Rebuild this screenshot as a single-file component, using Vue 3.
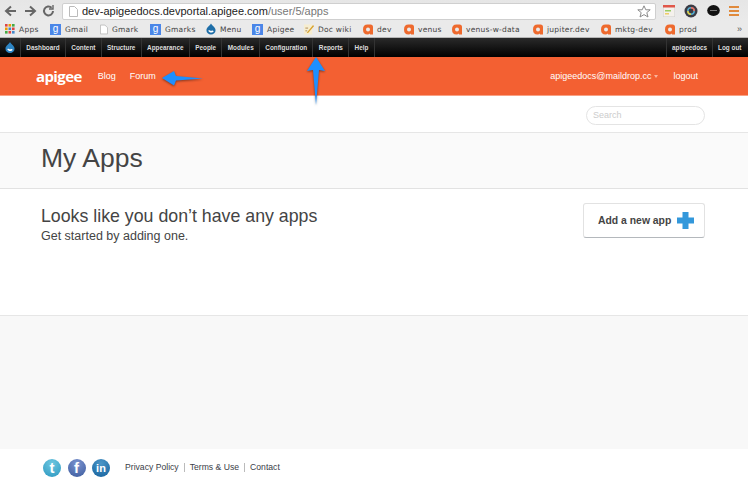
<script setup>
const marks = [
  { label: 'Apps', kind: 'grid', w: 45 },
  { label: 'Gmail', kind: 'g', w: 50 },
  { label: 'Gmark', kind: 'doc', w: 50 },
  { label: 'Gmarks', kind: 'g', w: 56 },
  { label: 'Menu', kind: 'drop', w: 46 },
  { label: 'Apigee', kind: 'g', w: 52 },
  { label: 'Doc wiki', kind: 'wiki', w: 59 },
  { label: 'dev', kind: 'a', w: 41 },
  { label: 'venus', kind: 'a', w: 48 },
  { label: 'venus-w-data', kind: 'a', w: 81 },
  { label: 'jupiter.dev', kind: 'a', w: 68 },
  { label: 'mktg-dev', kind: 'a', w: 64 },
  { label: 'prod', kind: 'a', w: 40 },
]
const adminLinks = ['Dashboard', 'Content', 'Structure', 'Appearance', 'People', 'Modules', 'Configuration', 'Reports', 'Help']
</script>

<template>
  <div class="page">
    <div class="toolbar">
      <div class="nav-buttons">
        <svg width="54" height="14" viewBox="0 0 54 14" fill="none" stroke="#666" stroke-width="2">
          <path d="M13 7H3M8 2.500 3 7l5 4.500" />
          <path d="M22 7h10M27 2.500 32 7l-5 4.500" />
          <path d="M50 7a4.500 4.500 0 1 1-1.400-3.300" />
          <path d="M50 1v4h-4" stroke-width="1.400" />
        </svg>
      </div>
      <div class="omnibox">
        <svg class="page-icon" width="9" height="11" viewBox="0 0 9 11"><path d="M.5.5h5l3 3v7H.5z" fill="#fff" stroke="#bbb" /></svg>
        <span class="url">dev-apigeedocs.devportal.apigee.com<span class="url-path">/user/5/apps</span></span>
        <svg class="star" width="14" height="13" viewBox="0 0 14 13"><path d="M7 .8l1.800 4h4.400l-3.400 2.800 1.200 4.400L7 9.600 3 12l1.200-4.400L.8 4.800h4.400z" fill="#fff" stroke="#8a8a8a" /></svg>
      </div>
      <div class="extensions">
        <svg width="12" height="12" viewBox="0 0 12 12"><rect width="12" height="12" fill="#f4f1ec" stroke="#ccc" /><rect width="12" height="2.500" fill="#e0574a" /><rect x="2" y="5" width="6" height="1.500" fill="#9c6" /><rect x="2" y="8" width="4" height="1.500" fill="#ec6" /></svg>
        <svg width="14" height="14" viewBox="0 0 14 14"><circle cx="7" cy="7" r="6.500" fill="#3b3b44" /><circle cx="7" cy="7" r="3.200" fill="none" stroke="#5ac" stroke-width="1.500" /><path d="M7 3.800A3.200 3.200 0 0 1 10.200 7" fill="none" stroke="#e65" stroke-width="1.500" /><path d="M3.800 7A3.200 3.200 0 0 0 7 10.200" fill="none" stroke="#dc4" stroke-width="1.500" /></svg>
        <svg width="13" height="11" viewBox="0 0 13 11"><ellipse cx="6.500" cy="5.500" rx="6.300" ry="5.400" fill="#111" /><rect x="3" y="5" width="7" height="1" fill="#777" /></svg>
        <svg width="10" height="10" viewBox="0 0 10 10" fill="#e08a3c"><rect width="10" height="2" /><rect y="4" width="10" height="2" /><rect y="8" width="10" height="2" /></svg>
      </div>
    </div>

    <div class="bookmarks">
      <div v-for="m in marks" :key="m.label" class="mark" :style="{ width: m.w + 'px' }">
        <svg v-if="m.kind === 'grid'" class="mark-icon" width="10" height="10" viewBox="0 0 10 10">
          <g v-for="(c, i) in ['#d44','#e90','#4a4','#e90','#48c','#d44','#4a4','#d44','#48c']" :key="i">
            <rect :x="(i % 3) * 3.500" :y="Math.floor(i / 3) * 3.500" width="2.600" height="2.600" :fill="c" />
          </g>
        </svg>
        <span v-else-if="m.kind === 'g'" class="g-icon">g</span>
        <svg v-else-if="m.kind === 'doc'" class="mark-icon doc-icon" width="8" height="11" viewBox="0 0 9 11"><path d="M.5.500h5l3 3v7H.5z" fill="#fff" stroke="#bbb" /></svg>
        <svg v-else-if="m.kind === 'drop'" class="mark-icon" width="11" height="12" viewBox="0 0 11 12"><path d="M5.500 0C6.500 2.500 10.500 4 10.500 7.300a5 4.700 0 0 1-10 0C.5 4 4.500 2.500 5.500 0z" fill="#1e6ea8" /><path d="M2.500 8c1.500-1.500 2.500 1 3.500 0s2 0 2.500.5C7.500 10.500 3.500 10.500 2.500 8z" fill="#fff" /></svg>
        <svg v-else-if="m.kind === 'wiki'" class="mark-icon" width="11" height="12" viewBox="0 0 11 12"><rect y="1" width="9" height="11" fill="#f6edd0" /><path d="M3 10 10 1.500 11 3 4.500 10.500z" fill="#d9a32e" /><path d="M1.500 5h3M1.500 8h2" stroke="#a85" /></svg>
        <svg v-else class="mark-icon" width="10" height="11" viewBox="0 0 10 11"><path d="M4.500.5H7.500Q10 .5 10 3v7.500H7L6.800 9.500Q6 10.500 4.500 10.500 0 10.500 0 5.500T4.500.5zM5 3.500Q3 3.500 3 5.500T5 7.500 7 5.500 5 3.500z" fill="#ee6a2e" fill-rule="evenodd" /></svg>
        <span class="mark-label">{{ m.label }}</span>
      </div>
      <span class="more">»</span>
    </div>

    <div class="admin-bar">
      <div class="admin-home">
        <svg width="10" height="11" viewBox="0 0 11 12"><path d="M5.500 0C6.500 2.500 10.500 4 10.500 7.300a5 4.700 0 0 1-10 0C.5 4 4.500 2.500 5.500 0z" fill="#2d85c4" /><path d="M2.500 8c1.500-1.500 2.500 1 3.500 0s2 0 2.500.5C7.500 10.500 3.500 10.500 2.500 8z" fill="#fff" /></svg>
      </div>
      <span v-for="l in adminLinks" :key="l" class="admin-link">{{ l }}</span>
      <span class="admin-spacer"></span>
      <span class="admin-link admin-user">apigeedocs</span>
      <span class="admin-link admin-logout">Log out</span>
    </div>

    <header class="brand-bar">
      <span class="logo">apigee</span>
      <nav class="brand-nav">
        <span>Blog</span>
        <span>Forum</span>
      </nav>
      <span class="brand-spacer"></span>
      <span class="user">apigeedocs@maildrop.cc<i class="caret"></i></span>
      <span class="logout">logout</span>
    </header>

    <div class="search-row">
      <div class="search">Search</div>
    </div>

    <div class="title-band">
      <h1>My Apps</h1>
    </div>

    <main class="content">
      <div>
        <h2>Looks like you don’t have any apps</h2>
        <p>Get started by adding one.</p>
      </div>
      <div class="add-btn">
        <span>Add a new app</span>
        <svg width="17" height="17" viewBox="0 0 17 17"><path d="M5.500 0h6v5.500H17v6h-5.500V17h-6v-5.500H0v-6h5.500z" fill="#3398db" /></svg>
      </div>
    </main>

    <div class="gray-band"></div>

    <footer class="footer">
      <div class="socials">
        <span class="social tw">t</span>
        <span class="social fb">f</span>
        <span class="social in">in</span>
      </div>
      <div class="foot-links">
        <span>Privacy Policy</span>
        <span class="foot-sep"></span>
        <span>Terms &amp; Use</span>
        <span class="foot-sep"></span>
        <span>Contact</span>
      </div>
    </footer>

    <svg class="arrow arrow-left" width="46" height="20" viewBox="0 0 46 20">
      <path d="M2 9 14 2l2 5 27 2.500L16 11.500l-2 5z" fill="#1e8fff" />
    </svg>
    <svg class="arrow arrow-up" width="22" height="52" viewBox="0 0 22 52">
      <path d="M11 1l9 14-6-1-3 35-3-35-6 1z" fill="#1e8fff" />
    </svg>
  </div>
</template>

<style scoped>
.page {
  position: relative;
  width: 748px;
  height: 488px;
  overflow: hidden;
  background: #fff;
  font-family: "Liberation Sans", Arial, sans-serif;
}
.toolbar {
  height: 21px;
  display: flex;
  align-items: center;
  background: linear-gradient(#e6e6e6, #eaeaea);
}
.nav-buttons {
  width: 62px;
  display: flex;
  padding-left: 3px;
  box-sizing: border-box;
  flex: none;
}
.omnibox {
  width: 594px;
  height: 17px;
  margin-top: 1px;
  box-sizing: border-box;
  background: #fff;
  border: 1px solid #cfcfcf;
  border-radius: 2px;
  display: flex;
  align-items: center;
  padding-left: 6px;
  flex: none;
}
.page-icon { flex: none; }
.url {
  margin-left: 4px;
  font-size: 11px;
  color: #222;
  flex: 1;
}
.url-path { color: #777; }
.star { margin-right: 4px; flex: none; }
.extensions {
  flex: 1;
  display: flex;
  align-items: center;
  padding-left: 7px;
  gap: 9px;
}
.bookmarks {
  height: 16px;
  display: flex;
  align-items: center;
  padding-left: 5px;
  background: #eaeaea;
  border-bottom: 1px solid #b5b5b5;
}
.mark {
  flex: none;
  display: flex;
  align-items: center;
  height: 100%;
}
.mark-icon { flex: none; width: 10px; }
.doc-icon { width: 8px; }
.g-icon {
  flex: none;
  width: 11px;
  height: 11px;
  background: #4a86e8;
  color: #fff;
  font-size: 10px;
  line-height: 9px;
  text-align: center;
}
.mark-label {
  margin-left: 4px;
  font-family: "DejaVu Sans", sans-serif;
  font-size: 7.500px;
  letter-spacing: .25px;
  color: #444;
  white-space: nowrap;
}
.more {
  margin-left: auto;
  margin-right: 6px;
  font-size: 9px;
  color: #555;
}
.admin-bar {
  height: 19px;
  display: flex;
  align-items: stretch;
  background: linear-gradient(#2a2a2a, #000);
  color: #ddd;
}
.admin-home {
  width: 20px;
  flex: none;
  display: flex;
  align-items: center;
  justify-content: center;
  border-right: 1px solid #333;
}
.admin-link {
  display: flex;
  align-items: center;
  padding: 0 5.300px;
  font-size: 6.400px;
  font-weight: 700;
  white-space: nowrap;
  border-right: 1px solid #333;
  color: #ddd;
}
.admin-spacer { flex: 1; }
.admin-user {
  border-left: 1px solid #333;
  border-right: 0;
  width: 46px;
  padding: 0 5px;
  box-sizing: border-box;
}
.admin-logout {
  border-left: 1px solid #333;
  border-right: 0;
  width: 36px;
  padding: 0 5px;
  box-sizing: border-box;
}
.brand-bar {
  height: 39px;
  background: #f36032;
  display: flex;
  align-items: center;
  padding: 0 50px 0 36px;
  color: #fff;
  font-size: 9px;
  box-sizing: border-box;
  border-bottom: 1px solid #f9a184;
}
.logo {
  font-family: "Open Sans", sans-serif;
  font-size: 15px;
  font-weight: 700;
  letter-spacing: -.6px;
}
.brand-nav {
  display: flex;
  gap: 14px;
  margin-left: 16px;
}
.brand-spacer { flex: 1; }
.user { display: flex; align-items: center; font-size: 9px; }
.caret {
  margin-left: 3px;
  border: 2.500px solid transparent;
  border-top: 3px solid #f9b49c;
  border-bottom: 0;
}
.logout { margin-left: 15px; }
.search-row {
  height: 37px;
  display: flex;
  justify-content: flex-end;
  align-items: center;
  padding: 2px 43px 0 0;
  box-sizing: border-box;
  border-bottom: 1px solid #e6e6e6;
}
.search {
  width: 119px;
  height: 19px;
  box-sizing: border-box;
  border: 1px solid #e4e4e4;
  border-radius: 10px;
  padding-left: 6px;
  font-size: 9px;
  line-height: 17px;
  color: #ccc;
}
.title-band {
  height: 56px;
  box-sizing: border-box;
  background: #fafafa;
  border-bottom: 1px solid #e2e2e2;
  padding: 9px 0 0 41px;
}
h1 {
  margin: 0;
  font-size: 26.500px;
  line-height: 32px;
  font-weight: 400;
  color: #444;
}
.content {
  height: 127px;
  box-sizing: border-box;
  padding: 14px 43px 0 41px;
  display: flex;
  justify-content: space-between;
  align-items: flex-start;
  border-bottom: 1px solid #e6e6e6;
}
h2 {
  margin: 3px 0 0;
  font-size: 17.750px;
  line-height: 20px;
  font-weight: 400;
  color: #444;
}
p {
  margin: 3px 0 0;
  font-size: 12.500px;
  line-height: 14px;
  color: #444;
}
.add-btn {
  width: 122px;
  height: 35px;
  box-sizing: border-box;
  display: flex;
  align-items: center;
  justify-content: flex-start;
  gap: 6px;
  padding-left: 14px;
  background: #fff;
  border: 1px solid #e2e2e2;
  border-bottom: 1px solid #b4b8bc;
  border-radius: 3px;
  font-size: 10.400px;
  font-weight: 700;
  color: #444;
}
.gray-band {
  height: 133px;
  background: #f8f8f8;
}
.footer {
  height: 39px;
  box-sizing: border-box;
  padding: 0 0 2px 43px;
  display: flex;
  align-items: center;
}
.socials {
  display: flex;
  gap: 6.500px;
  width: 82px;
  flex: none;
}
.social {
  width: 18px;
  height: 18px;
  border-radius: 50%;
  color: #fff;
  font-weight: 700;
  font-size: 15px;
  line-height: 18px;
  text-align: center;
}
.tw { background: radial-gradient(circle at 50% 25%, #6fc7e0, #2a97c0); }
.fb { background: radial-gradient(circle at 50% 25%, #7b93d0, #3b5a9c); }
.in { background: radial-gradient(circle at 50% 25%, #4c97c8, #14609c); font-size: 11px; }
.foot-links {
  display: flex;
  align-items: center;
  gap: 5px;
  margin-bottom: 1px;
  font-size: 8.650px;
  color: #3a4048;
}
.foot-sep {
  width: 1px;
  height: 9px;
  background: #bbb;
}
.arrow { position: absolute; overflow: visible; filter: drop-shadow(0 1px 1px rgba(0, 0, 0, .45)); }
.arrow-left { left: 160px; top: 69px; }
.arrow-up { left: 305px; top: 56px; }
</style>

<style>
html, body { margin: 0; overflow: hidden; }
</style>
